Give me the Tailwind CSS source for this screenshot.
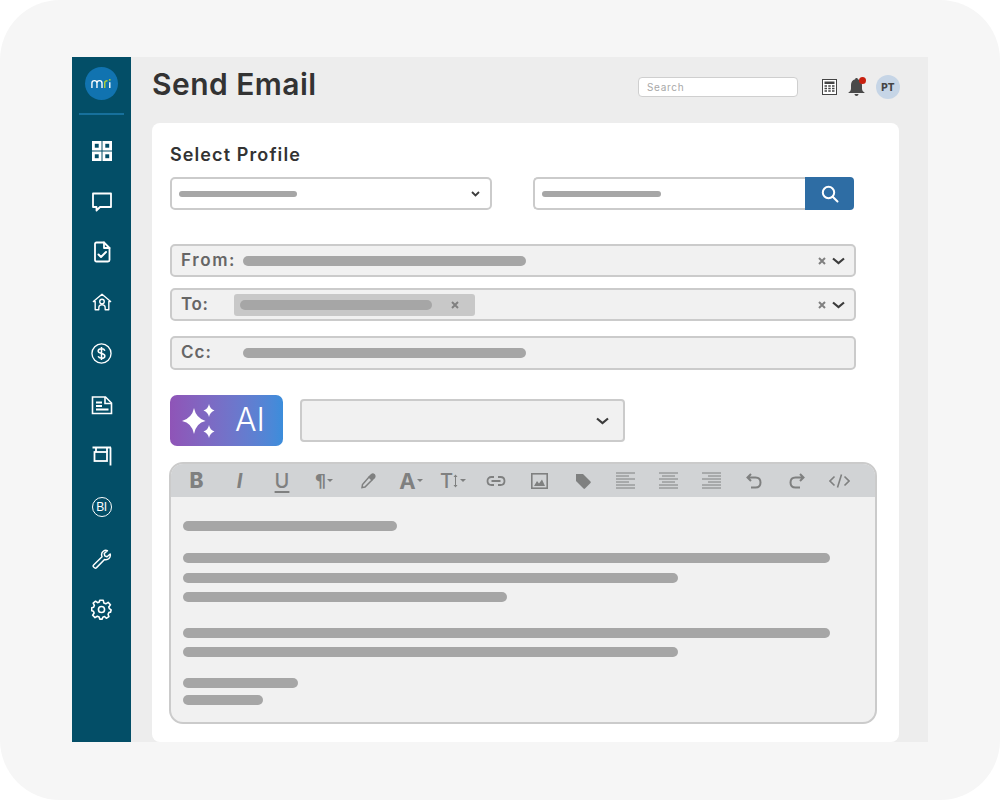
<!DOCTYPE html>
<html lang="en">
<head>
    <meta charset="UTF-8">
    <title>Send Email</title>
    <script src="https://cdn.jsdelivr.net/npm/@tailwindcss/browser@4"></script>
</head>
<body class="bg-white font-['Inter',sans-serif]">
    <div class="w-[1000px] h-[800px] bg-[#f6f6f6] rounded-[60px] pt-[57px] pl-[72px]">
        <div class="w-[856px] h-[685px] flex">

            <!-- Sidebar -->
            <aside class="w-[59px] bg-[#034e67] flex flex-col items-center text-white">
                <div class="mt-[10px] w-[33px] h-[33px] rounded-full bg-[#1173b0] flex items-center justify-center">
                    <svg width="22" height="11" viewBox="0 0 24 12" fill="none" stroke-width="1.500">
                        <path d="M1 11V5.500C1 2 6.500 2 6.500 5.500V11M6.500 5.500C6.500 2 12 2 12 5.500V11" stroke="#fff"/>
                        <path d="M15 11V5C15 3.500 16 3 18 3" stroke="#b5d334"/>
                        <path d="M20.500 11V4.500" stroke="#fff"/>
                        <circle cx="20.500" cy="2" r="1" fill="#b5d334" stroke="none"/>
                    </svg>
                </div>
                <div class="mt-[13px] w-[45px] h-[2px] bg-[#17709c] mb-[10px]"></div>
                <div class="h-[51px] flex items-center justify-center">
                    <svg width="22" height="22" viewBox="0 0 22 22" fill="none" stroke="currentColor" stroke-width="2.800"><rect x="2.400" y="2.400" width="6.700" height="6.700"/><rect x="12.900" y="2.400" width="6.700" height="6.700"/><rect x="2.400" y="12.900" width="6.700" height="6.700"/><rect x="12.900" y="12.900" width="6.700" height="6.700"/></svg>
                </div>
                <div class="h-[51px] flex items-center justify-center">
                    <svg width="22" height="22" viewBox="0 0 22 22" fill="none" stroke="currentColor" stroke-width="1.800" stroke-linejoin="round"><path d="M2 2.500H20V16H9L5.500 19.500V16H2Z"/></svg>
                </div>
                <div class="h-[49px] flex items-center justify-center">
                    <svg width="22" height="22" viewBox="0 0 22 22" fill="none" stroke="currentColor" stroke-width="1.800" stroke-linejoin="round" stroke-linecap="round"><path d="M4 3C4 2 4.500 1.500 5.500 1.500H13L18.500 7V19C18.500 20 18 20.500 17 20.500H5.500C4.500 20.500 4 20 4 19Z"/><path d="M13 1.500V7H18.500"/><path d="M7.500 13.500L10 16L15 11" stroke-width="2"/></svg>
                </div>
                <div class="h-[52px] flex items-center justify-center">
                    <svg width="20" height="20" viewBox="0 0 22 22" fill="none" stroke="currentColor" stroke-width="1.500" stroke-linejoin="round"><path d="M1.500 10.500L11 2.500L20.500 10.500H18.500V19.500H14.500C14.500 17 15 14 11 14C7 14 7.500 17 7.500 19.500H3.500V10.500Z"/><circle cx="11" cy="10.500" r="2.500"/></svg>
                </div>
                <div class="h-[51px] flex items-center justify-center">
                    <svg width="21" height="21" viewBox="0 0 22 22" fill="none" stroke="currentColor"><circle cx="11" cy="11" r="10" stroke-width="1.400"/><path d="M14.500 8C14 6.500 12.500 6 11 6C9 6 7.500 7 7.500 8.500C7.500 12 14.500 10 14.500 13.500C14.500 15 13 16 11 16C9.500 16 8 15.500 7.500 14M11 4.300V17.700" stroke-width="1.600"/></svg>
                </div>
                <div class="h-[51px] flex items-center justify-center">
                    <svg width="22" height="22" viewBox="0 0 22 22" fill="none" stroke="currentColor" stroke-width="1.600"><path d="M1.500 3H14.500L20.500 9V19.500H1.500Z"/><path d="M14 3V9.500H20.500"/><path d="M5 8.500H11M5 12H11M5 15.500H17.500" stroke-width="2"/></svg>
                </div>
                <div class="h-[51px] flex items-center justify-center">
                    <svg width="22" height="22" viewBox="0 0 22 22" fill="none" stroke="currentColor" stroke-width="1.800"><path d="M1.500 2.500H20M19.500 2.500V20.500M5 2.500V7M16 2.500V7"/><rect x="3.500" y="7" width="12.500" height="9"/></svg>
                </div>
                <div class="h-[52px] flex items-center justify-center">
                    <div class="w-[20px] h-[20px] rounded-full border-[1.500px] border-white flex items-center justify-center text-[12px] leading-none tracking-[-.5px] font-['Liberation_Sans',sans-serif]">BI</div>
                </div>
                <div class="h-[51px] flex items-center justify-center">
                    <svg width="20" height="20" viewBox="0 0 22 22" fill="none" stroke="currentColor" stroke-width="1.600" stroke-linejoin="round"><path d="M20 5.500L16.500 8.500L14 7.500L13.500 5L17 1.800C14 .8 10.500 2.500 10.500 6C10.500 7 10.700 7.800 11 8.500L1.800 17.500C1 18.300 1 19 1.800 19.800L2.800 20.700C3.500 21.300 4.200 21.300 5 20.500L13.800 11.500C17.500 12.500 21 9.500 20 5.500Z"/></svg>
                </div>
                <div class="h-[50px] flex items-center justify-center">
                    <svg width="21" height="21" viewBox="0 0 24 24" fill="none" stroke="currentColor" stroke-width="1.800" stroke-linejoin="round"><circle cx="12" cy="12" r="3.500"/><path d="M10 1.500H14L14.700 4.600L16.900 5.500L19.600 3.800L22.200 6.700L20.300 9.200L21 11L23 12.500L22.300 15.200L20.600 15.300L19.500 17.500L20.500 20.200L17.500 22L15.500 20L13.500 20.800L12.800 23H10L9.300 20.500L7.200 19.700L4.600 21.300L1.900 18.500L3.600 16L2.800 14L.8 13.400V10L3 9.400L3.800 7.300L2.500 4.800L5.200 2.500L7.500 4.200L9.500 3.500Z"/></svg>
                </div>
            </aside>

            <!-- Main -->
            <main class="flex-1 bg-[#ededed] pl-[21px] pr-[29px]">
                <header class="h-[66px] flex items-center">
                    <h1 class="text-[30px] leading-none font-semibold tracking-[.45px] text-[#333] mb-[12px]">Send Email</h1>
                    <div class="ml-auto flex items-center mb-[6px]">
                        <div class="w-[160px] h-[20px] bg-white border border-[#cfcfcf] rounded-[4px] pl-[8px] flex items-center text-[10px] tracking-[.7px] text-[#a8a8a8]">Search</div>
                        <svg class="ml-[24px]" width="15" height="16" viewBox="0 0 15 16" fill="none"><rect x=".5" y=".5" width="14" height="15" stroke="#444" fill="#fff"/><rect x="2.500" y="2.500" width="10" height="2.500" fill="#444"/><path d="M2.500 7H5M6.250 7H8.750M10 7H12.500M2.500 9.500H5M6.250 9.500H8.750M10 9.500H12.500M2.500 12H5M6.250 12H8.750M10 12H12.500" stroke="#444" stroke-width="1.500"/></svg>
                        <div class="relative ml-[11px]">
                            <svg class="block" width="17" height="18" viewBox="0 0 17 18" fill="#4a4a4a"><path d="M8.500 0C9.300 0 9.800 .5 9.800 1.200C12.500 1.800 14 4 14 7V10.500C14 12.500 15 13.500 16.500 14.500V15H.5V14.500C2 13.500 3 12.500 3 10.500V7C3 4 4.500 1.800 7.200 1.200C7.200 .5 7.700 0 8.500 0Z"/><path d="M6.500 16H10.500C10.500 17.200 9.500 18 8.500 18C7.500 18 6.500 17.200 6.500 16Z"/></svg>
                            <div class="absolute -top-[1px] -right-[1px] w-[7px] h-[7px] rounded-full bg-[#c8200f]"></div>
                        </div>
                        <div class="ml-[11px] mr-[-1px] w-[24px] h-[24px] rounded-full bg-[#c6d5e6] flex items-center justify-center text-[10px] font-extrabold text-[#444]">PT</div>
                    </div>
                </header>

                <section class="h-[619px] bg-white rounded-lg pl-[18px] pt-[20px]">
                    <h2 class="h-[22px] leading-[22px] text-[18px] font-semibold tracking-[1.100px] text-[#333] pt-[1px]">Select Profile</h2>

                    <div class="mt-[12px] flex gap-[41px]">
                        <div class="w-[322px] h-[33px] bg-white border-2 border-[#cbcbcb] rounded-[5px] flex items-center pl-[7px] pr-[10px]">
                            <div class="w-[118px] h-[6px] rounded-full bg-[#a6a6a6]"></div>
                            <svg class="ml-auto" width="9" height="6" viewBox="0 0 9 6" fill="none" stroke="#3c3c3c" stroke-width="1.800"><path d="M1 1L4.500 4.500L8 1"/></svg>
                        </div>
                        <div class="flex h-[33px]">
                            <div class="w-[272px] bg-white border-2 border-r-0 border-[#cbcbcb] rounded-l-[5px] flex items-center pl-[7px]">
                                <div class="w-[119px] h-[6px] rounded-full bg-[#a6a6a6]"></div>
                            </div>
                            <div class="w-[49px] bg-[#2e6da4] rounded-r-[4px] flex items-center justify-center">
                                <svg width="18" height="18" viewBox="0 0 18 18" fill="none" stroke="#fff" stroke-width="2"><circle cx="7.500" cy="7.500" r="5.700"/><path d="M11.700 11.700L16.500 16.500" stroke-linecap="round"/></svg>
                            </div>
                        </div>
                    </div>

                    <div class="mt-[34px] w-[686px] h-[33px] bg-[#f1f1f1] border-2 border-[#cbcbcb] rounded-[5px] flex items-center pl-[9px] pr-[9px]">
                        <span class="w-[62px] text-[17px] font-semibold tracking-[1.600px] text-[#666]">From:</span>
                        <div class="w-[283px] h-[10px] rounded-full bg-[#a6a6a6]"></div>
                        <svg class="ml-auto" width="8" height="8" viewBox="0 0 8 8" stroke="#808080" stroke-width="2"><path d="M1 1L7 7M7 1L1 7"/></svg>
                        <svg class="ml-[6px]" width="13" height="8" viewBox="0 0 13 8" fill="none" stroke="#3c3c3c" stroke-width="2.200"><path d="M1 1.500L6.500 6L12 1.500"/></svg>
                    </div>

                    <div class="mt-[11px] w-[686px] h-[33px] bg-[#f1f1f1] border-2 border-[#cbcbcb] rounded-[5px] flex items-center pl-[9px] pr-[9px]">
                        <span class="w-[53px] text-[17px] font-semibold tracking-[.6px] text-[#666]">To:</span>
                        <div class="w-[241px] h-[22px] bg-[#c8c8c8] rounded-[3px] flex items-center pl-[6px]">
                            <div class="w-[192px] h-[10px] rounded-full bg-[#a6a6a6]"></div>
                            <svg class="ml-[19px]" width="8" height="8" viewBox="0 0 8 8" stroke="#808080" stroke-width="2"><path d="M1 1L7 7M7 1L1 7"/></svg>
                        </div>
                        <svg class="ml-auto" width="8" height="8" viewBox="0 0 8 8" stroke="#808080" stroke-width="2"><path d="M1 1L7 7M7 1L1 7"/></svg>
                        <svg class="ml-[6px]" width="13" height="8" viewBox="0 0 13 8" fill="none" stroke="#3c3c3c" stroke-width="2.200"><path d="M1 1.500L6.500 6L12 1.500"/></svg>
                    </div>

                    <div class="mt-[15px] w-[686px] h-[34px] bg-[#f1f1f1] border-2 border-[#cbcbcb] rounded-[5px] flex items-center pl-[9px]">
                        <span class="w-[62px] text-[17px] font-semibold tracking-[1px] text-[#666]">Cc:</span>
                        <div class="w-[283px] h-[10px] rounded-full bg-[#a6a6a6]"></div>
                    </div>

                    <div class="mt-[25px] flex items-center">
                        <div class="w-[113px] h-[51px] rounded-[7px] bg-gradient-to-r from-[#8f54b7] to-[#3b8ddb] flex items-center pl-[12px] text-white">
                            <svg width="36" height="36" viewBox="0 0 36 36" fill="#fff"><path d="M12 5Q14 15 23.500 18Q14 20 12 31Q10 20 0 18Q10 15 12 5Z"/><path d="M27 1Q28 6 32.500 7.500Q28 9 27 14Q26 9 21.500 7.500Q26 6 27 1Z"/><path d="M27 22Q28 27 32.500 28.500Q28 30 27 35Q26 30 21.500 28.500Q26 27 27 22Z"/></svg>
                            <span class="ml-[17px] text-[32px] leading-none font-light mb-[2px]">AI</span>
                        </div>
                        <div class="ml-[17px] w-[325px] h-[43px] bg-[#f1f1f1] border-2 border-[#cbcbcb] rounded-[4px] flex items-center justify-end pr-[14px]">
                            <svg width="13" height="8" viewBox="0 0 13 8" fill="none" stroke="#3c3c3c" stroke-width="2.200"><path d="M1 1.500L6.500 6L12 1.500"/></svg>
                        </div>
                    </div>

                    <!-- Editor -->
                    <div class="mt-[16px] ml-[-1px] w-[708px] h-[262px] bg-[#f1f1f1] border-2 border-[#cbcbcb] rounded-[14px] overflow-hidden">
                        <div class="h-[33px] bg-[#d1d3d5] flex items-center pl-[4px] text-[#7f8080]">
                            <div class="w-[43px] flex justify-center text-[21px] leading-none font-extrabold">B</div>
                            <div class="w-[43px] flex justify-center text-[20px] leading-none font-bold italic">I</div>
                            <div class="w-[42px] flex justify-center text-[20px] leading-none font-medium underline underline-offset-[3px]">U</div>
                            <div class="w-[42px] flex justify-center items-center text-[18px] leading-none font-bold font-['DejaVu_Sans',sans-serif]">¶<svg class="ml-[1px]" width="6" height="4" fill="#7f8080"><path d="M0 0H6L3 3Z"/></svg></div>
                            <div class="w-[45px] flex justify-center">
                                <svg width="16" height="16" viewBox="0 0 16 16" fill="none" stroke="#7f8080" stroke-width="1.500"><path d="M9 4L12 7L5 14L2 14.500L2.500 11.500Z"/><path d="M9.500 3.500L11.500 1.500C12.500 .8 13.500 1 14.300 1.800C15 2.600 15 3.500 14.500 4.500L12.500 6.500Z" fill="#7f8080"/></svg>
                            </div>
                            <div class="w-[42px] flex justify-center items-center text-[22px] leading-none font-bold">A<svg class="ml-[1px]" width="6" height="4" fill="#7f8080"><path d="M0 0H6L3 3Z"/></svg></div>
                            <div class="w-[42px] flex justify-center items-center text-[20px] leading-none font-medium">T<svg width="5" height="14" viewBox="0 0 5 14" stroke="#7f8080" fill="#7f8080"><path d="M2.500 1V13" stroke-width="1"/><path d="M.5 3L2.500 .5L4.500 3ZM.5 11L2.500 13.500L4.500 11Z" stroke="none"/></svg><svg class="ml-[2px]" width="6" height="4" fill="#7f8080"><path d="M0 0H6L3 3Z"/></svg></div>
                            <div class="w-[44px] flex justify-center">
                                <svg width="20" height="12" viewBox="0 0 20 12" fill="none" stroke="#7f8080" stroke-width="1.800"><path d="M8 2H5.500C3 2 1.500 3.500 1.500 6C1.500 8.500 3 10 5.500 10H8M12 2H14.500C17 2 18.500 3.500 18.500 6C18.500 8.500 17 10 14.500 10H12M5.500 6H14.500"/></svg>
                            </div>
                            <div class="w-[43px] flex justify-center">
                                <svg width="17" height="16" viewBox="0 0 17 16" fill="none"><rect x=".8" y=".8" width="15.400" height="14.400" stroke="#7f8080" stroke-width="1.600"/><path d="M3 13L6 8L8 10.500L11 6.500L14 13Z" fill="#7f8080"/></svg>
                            </div>
                            <div class="w-[43px] flex justify-center">
                                <svg width="16" height="16" viewBox="0 0 16 16" fill="#7f8080"><path d="M1 1H8L15.500 8.500C16 9 16 9.500 15.500 10L10 15.500C9.500 16 9 16 8.500 15.500L1 8Z"/></svg>
                            </div>
                            <div class="w-[43px] flex justify-center">
                                <svg width="19" height="17" viewBox="0 0 19 17" stroke="#7f8080"><path d="M0 1H19M0 4H13M0 7H19M0 10H13M0 13H19M0 16H19"/></svg>
                            </div>
                            <div class="w-[43px] flex justify-center">
                                <svg width="19" height="17" viewBox="0 0 19 17" stroke="#7f8080"><path d="M0 1H19M3 4H16M0 7H19M3 10H16M0 13H19M0 16H19"/></svg>
                            </div>
                            <div class="w-[43px] flex justify-center">
                                <svg width="19" height="17" viewBox="0 0 19 17" stroke="#7f8080"><path d="M0 1H19M6 4H19M0 7H19M6 10H19M0 13H19M0 16H19"/></svg>
                            </div>
                            <div class="w-[42px] flex justify-center">
                                <svg width="16" height="16" viewBox="0 0 16 16" fill="none" stroke="#7f8080" stroke-width="2"><path d="M5 1L1.500 4.500L5 8M2 4.500H9.500C12.500 4.500 14.500 6.500 14.500 9.500C14.500 12.500 12.500 14.500 9.500 14.500H5"/></svg>
                            </div>
                            <div class="w-[43px] flex justify-center">
                                <svg width="16" height="16" viewBox="0 0 16 16" fill="none" stroke="#7f8080" stroke-width="2"><path d="M11 1L14.500 4.500L11 8M14 4.500H6.500C3.500 4.500 1.500 6.500 1.500 9.500C1.500 12.500 3.500 14.500 6.500 14.500H11"/></svg>
                            </div>
                            <div class="w-[43px] flex justify-center">
                                <svg width="21" height="14" viewBox="0 0 21 14" fill="none" stroke="#7f8080" stroke-width="1.600"><path d="M5.500 2.500L1 7L5.500 11.500M15.500 2.500L20 7L15.500 11.500M12.500 .5L8.500 13.500"/></svg>
                            </div>
                        </div>
                        <div class="pl-[12px] pt-[24px]">
                            <div class="w-[214px] h-[10px] rounded-full bg-[#a6a6a6]"></div>
                            <div class="mt-[22px] w-[647px] h-[10px] rounded-full bg-[#a6a6a6]"></div>
                            <div class="mt-[10px] w-[495px] h-[10px] rounded-full bg-[#a6a6a6]"></div>
                            <div class="mt-[9px] w-[324px] h-[10px] rounded-full bg-[#a6a6a6]"></div>
                            <div class="mt-[26px] w-[647px] h-[10px] rounded-full bg-[#a6a6a6]"></div>
                            <div class="mt-[9px] w-[495px] h-[10px] rounded-full bg-[#a6a6a6]"></div>
                            <div class="mt-[21px] w-[115px] h-[10px] rounded-full bg-[#a6a6a6]"></div>
                            <div class="mt-[7px] w-[80px] h-[10px] rounded-full bg-[#a6a6a6]"></div>
                        </div>
                    </div>
                </section>
            </main>
        </div>
    </div>
</body>
</html>
